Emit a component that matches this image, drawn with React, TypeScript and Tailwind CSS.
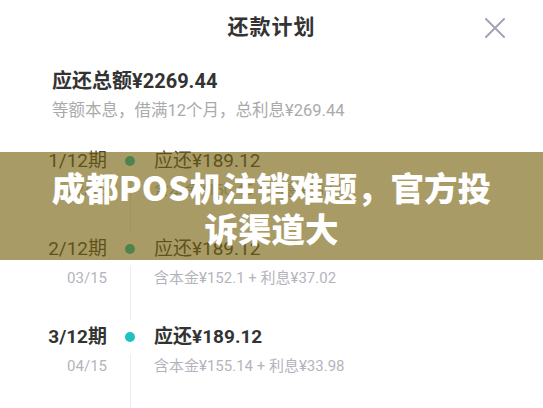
import React from "react";

type Row = {
  period: string;
  date: string;
  amount: string;
  detail: string;
  current?: boolean;
};

const rows: Row[] = [
  { period: "1/12期", date: "02/15", amount: "应还¥189.12", detail: "含本金¥150.45 + 利息¥38.67" },
  { period: "2/12期", date: "03/15", amount: "应还¥189.12", detail: "含本金¥152.1 + 利息¥37.02" },
  { period: "3/12期", date: "04/15", amount: "应还¥189.12", detail: "含本金¥155.14 + 利息¥33.98", current: true },
];

function TimelineRow({ row }: { row: Row }) {
  return (
    <div className="flex h-[88px]">
      <div className="w-[107px] flex flex-col items-end">
        <div
          className={
            "h-[34px] flex items-center text-[19px] " +
            (row.current ? "font-bold text-[#333333]" : "font-normal text-[#4a4a4a]")
          }
        >
          {row.period}
        </div>
        <div className="mt-[1px] h-[22px] flex items-center text-[15px] text-[#b4b4bc]">{row.date}</div>
      </div>
      <div className="w-[46px] flex flex-col items-center">
        <div className="h-[34px] flex items-center">
          <div className="w-[10px] h-[10px] rounded-full bg-[#1ec3c0]" />
        </div>
        <div className="flex-1 w-px bg-[#ececf1]" />
      </div>
      <div className="flex flex-col pl-[1px]">
        <div
          className={
            "h-[34px] flex items-center text-[19px] " +
            (row.current ? "font-bold text-[#333333]" : "font-normal text-[#4a4a4a]")
          }
        >
          {row.amount}
        </div>
        <div className="mt-[1px] h-[22px] flex items-center text-[15px] text-[#b4b4bc] whitespace-nowrap">
          {row.detail}
        </div>
      </div>
    </div>
  );
}

export default function App() {
  return (
    <div
      className="relative w-[543px] h-[408px] overflow-hidden bg-white"
      style={{ fontFamily: 'Roboto, "Noto Sans CJK SC", sans-serif' }}
    >
      {/* header */}
      <div className="relative h-[56px] flex items-center justify-center">
        <div className="text-[21px] font-bold text-[#333333] tracking-[1px]">还款计划</div>
        <div className="absolute right-[38px] top-[18px] w-[20px] h-[20px]">
          <svg width="20" height="20" viewBox="0 0 20 20" fill="none">
            <path d="M1 1 L19 19 M19 1 L1 19" stroke="#a3a3b6" strokeWidth="2" strokeLinecap="round" />
          </svg>
        </div>
      </div>

      {/* summary */}
      <div className="pl-[52px] pt-[11px]">
        <div className="h-[28px] flex items-center text-[20px] font-bold text-[#333333]">应还总额¥2269.44</div>
        <div className="mt-[5px] h-[22px] flex items-center text-[16.5px] text-[#aaaaaa]">
          等额本息，借满12个月，总利息¥269.44
        </div>
      </div>

      {/* timeline */}
      <div className="mt-[22px] flex flex-col">
        {rows.map((r) => (
          <TimelineRow key={r.period} row={r} />
        ))}
      </div>

      {/* overlay banner */}
      <div className="absolute left-0 right-0 top-[152px] h-[108px] bg-[rgba(110,88,0,0.6)]">
        <div
          className="mx-auto w-[462px] pt-[14px] text-center text-white font-black text-[33.5px] leading-[41px]"
          style={{ fontFamily: '"Noto Sans CJK SC", sans-serif' }}
        >
          成都POS机注销难题，官方投诉渠道大
        </div>
      </div>
    </div>
  );
}
